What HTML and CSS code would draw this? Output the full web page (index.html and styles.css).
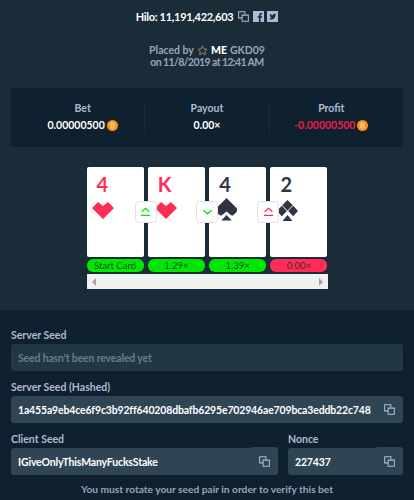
FILE: index.html
```html
<!DOCTYPE html>
<html lang="en">
<head>
    <meta charset="UTF-8">
    <meta name="viewport" content="width=device-width, initial-scale=1.0">
    <title>Hilo bet</title>
    <link rel="stylesheet" href="styles.css">
</head>
<body>
    <svg class="defs" width="0" height="0">
        <symbol id="copy" viewBox="0 0 12 12">
            <path d="M7.500 3.500V.7H.7v6.800h3.800M4.500 4.500h6.800v6.800H4.500z" fill="none" stroke="currentColor" stroke-width="1.100"/>
        </symbol>
        <symbol id="heart" viewBox="0 0 22 17">
            <path d="M6 0 11 4 16 0 22 6 11 17 0 6z" fill="#ff2d55"/>
        </symbol>
        <symbol id="spade" viewBox="0 0 21 23">
            <path d="M10.500 0 20 9.500c1.800 1.800 1.500 3.500 0 5L17.500 17c-1 .8-2 .6-3-.2l-4-3.300-4 3.300c-1 .8-2 1-3 .2L1 14.500c-1.500-1.500-1.800-3.200 0-5zM10.500 17l5.200 5.500H5.300z" fill="#2f3542"/>
        </symbol>
        <symbol id="diamond" viewBox="0 0 21 21">
            <path d="M10.500 0 15.800 5.300 10.500 10.600 5.200 5.300zM4.800 5.800 9.900 11 4.800 16.200 0 11zM16.200 5.800 21 11 16.200 16.200 11.100 11zM10.500 15l5 6H5.500z" fill="#2f3542"/>
        </symbol>
        <symbol id="btc" viewBox="0 0 11 11">
            <circle cx="5.500" cy="5.500" r="5.500" fill="#f7931a"/>
            <path d="M4 3h2.300c1 0 1 2 0 2.300 1.200 0 1.200 2.700 0 2.700H4zM4.500 5.400h1.700" fill="none" stroke="#fff" stroke-width=".8" opacity=".8"/>
        </symbol>
    </svg>

    <section class="top">
        <h1 class="title">
            <span class="title-text">Hilo: 11,191,422,603</span>
            <svg class="icon copy-light"><use href="#copy"/></svg>
            <svg class="icon social" viewBox="0 0 11 11"><path fill="#b1bad3" d="M0 0h11v11H7.600V6.800H9l.2-1.600H7.600v-1c0-.5.200-.8.800-.8h.8V1.900H8C6.700 1.900 6 2.700 6 4v1.200H4.600v1.600H6V11H0z"/></svg>
            <svg class="icon social" viewBox="0 0 11 11"><path fill="#b1bad3" fill-rule="evenodd" d="M0 0h11v11H0zM2 7.900c2.800 1.500 6.300.2 6.500-3.700l.7-.8-.8.200.6-.8-.8.300c-.9-1-2.600-.2-2.200 1.100-1.200 0-2.200-.6-2.900-1.400-.4.700-.2 1.500.4 2l-.6-.2c0 .7.400 1.200 1.100 1.400h-.6c.2.600.7.900 1.300 1-.6.500-1.500.7-2.700.7z"/></svg>
        </h1>

        <div class="placed">
            <div class="placed-line">
                Placed by
                <svg class="star" viewBox="0 0 12 12"><path d="M6 1l1.500 3.300 3.500.4-2.600 2.400.7 3.500L6 8.900l-3.100 1.700.7-3.500L1 4.700l3.500-.4z" fill="none" stroke="#a9865a" stroke-width="1"/></svg>
                <strong>ME</strong> <span class="user">GKD09</span>
            </div>
            <div class="placed-date">on 11/8/2019 at 12:41 AM</div>
        </div>

        <div class="stats">
            <div class="stat">
                <span class="stat-label">Bet</span>
                <span class="stat-value">0.00000500 <svg class="btc"><use href="#btc"/></svg></span>
            </div>
            <div class="stat">
                <span class="stat-label">Payout</span>
                <span class="stat-value">0.00×</span>
            </div>
            <div class="stat">
                <span class="stat-label">Profit</span>
                <span class="stat-value loss">-0.00000500 <svg class="btc"><use href="#btc"/></svg></span>
            </div>
        </div>

        <div class="game">
            <div class="hand">
                <div class="slot">
                    <div class="card red">
                        <span class="rank">4</span>
                        <svg class="suit heart"><use href="#heart"/></svg>
                    </div>
                    <div class="pill green">Start Card</div>
                </div>
                <div class="slot">
                    <div class="card red">
                        <span class="rank">K</span>
                        <svg class="suit heart"><use href="#heart"/></svg>
                        <div class="guess">
                            <svg viewBox="0 0 12 10"><path d="M1.800 4.800 6 1l4.200 3.800M1 8.700h10" fill="none" stroke="#00e701" stroke-width="1.400"/></svg>
                        </div>
                    </div>
                    <div class="pill green">1.29×</div>
                </div>
                <div class="slot">
                    <div class="card">
                        <span class="rank">4</span>
                        <svg class="suit spade"><use href="#spade"/></svg>
                        <div class="guess">
                            <svg viewBox="0 0 12 10"><path d="M1.500 3 6 7l4.500-4" fill="none" stroke="#00e701" stroke-width="1.400"/></svg>
                        </div>
                    </div>
                    <div class="pill green">1.39×</div>
                </div>
                <div class="slot">
                    <div class="card">
                        <span class="rank">2</span>
                        <svg class="suit club"><use href="#diamond"/></svg>
                        <div class="guess">
                            <svg viewBox="0 0 12 10"><path d="M1.800 4.800 6 1l4.200 3.800M1 8.700h10" fill="none" stroke="#ff2d55" stroke-width="1.400"/></svg>
                        </div>
                    </div>
                    <div class="pill red-pill">0.00×</div>
                </div>
            </div>
            <div class="scrollbar">
                <span class="arrow left"></span>
                <span class="arrow right"></span>
            </div>
        </div>
    </section>

    <section class="seeds">
        <div class="field">
            <label>Server Seed</label>
            <div class="input muted">Seed hasn't been revealed yet</div>
        </div>
        <div class="field">
            <label>Server Seed (Hashed)</label>
            <div class="input">
                <span>1a455a9eb4ce6f9c3b92ff640208dbafb6295e702946ae709bca3eddb22c748</span>
                <span class="copy-wrap"><svg class="icon"><use href="#copy"/></svg></span>
            </div>
        </div>
        <div class="field-row">
            <div class="field grow">
                <label>Client Seed</label>
                <div class="input">
                    <span>IGiveOnlyThisManyFucksStake</span>
                    <span class="copy-wrap"><svg class="icon"><use href="#copy"/></svg></span>
                </div>
            </div>
            <div class="field nonce">
                <label>Nonce</label>
                <div class="input">
                    <span>227437</span>
                    <span class="copy-wrap"><svg class="icon"><use href="#copy"/></svg></span>
                </div>
            </div>
        </div>
        <p class="note">You must rotate your seed pair in order to verify this bet</p>
    </section>
</body>
</html>
```

FILE: styles.css
```css
body {
    margin: 0;
    height: 500px;
    overflow: hidden;
    background-color: #1a2c38;
    font-family: "Lato", "Liberation Sans", sans-serif;
    font-size: 11px;
    font-weight: 700;
    color: #b1bad3;
}

.defs {
    display: block;
}

.top {
    height: 310px;
    padding: 9px 11px 0;
    box-sizing: border-box;
}

.title {
    display: flex;
    justify-content: center;
    align-items: center;
    gap: 3.500px;
    margin: 0;
    height: 14px;
    font-size: 11px;
    font-weight: 700;
    color: #fff;
}

.title-text {
    letter-spacing: -.3px;
}

.icon {
    width: 11px;
    height: 11px;
    flex: none;
}

.copy-light {
    margin-left: 1.500px;
    color: #b1bad3;
}

.placed {
    margin-top: 21px;
    text-align: center;
    line-height: 12px;
    font-size: 10.500px;
    color: #99a4b8;
}

.placed-line {
    display: flex;
    justify-content: center;
    align-items: center;
    gap: 3px;
}

.placed-date {
    letter-spacing: -.6px;
}

.placed strong {
    color: #fff;
}

.star {
    width: 11px;
    height: 11px;
}

.stats {
    display: flex;
    margin-top: 20px;
    height: 59px;
    padding: 14px 10px;
    box-sizing: border-box;
    background-color: #0f212e;
    border-radius: 3px;
}

.stat {
    flex: 1;
    display: flex;
    flex-direction: column;
    align-items: center;
    gap: 5px;
    border-left: 1px solid #1a2c38;
}

.stat:first-child {
    border-left: none;
}

.stat-value {
    display: flex;
    align-items: center;
    gap: 2px;
    color: #fff;
    font-size: 10.500px;
    line-height: 12px;
}

.stat-label {
    line-height: 12px;
    font-size: 10.500px;
}

.stat-value.loss {
    color: #ed1d49;
}

.btc {
    width: 11px;
    height: 11px;
}

.game {
    width: 241px;
    margin: 20px auto 0;
}

.hand {
    display: flex;
    justify-content: space-between;
}

.slot {
    width: 57px;
}

.card {
    position: relative;
    height: 90px;
    background-color: #fff;
    border-radius: 2px;
    color: #2f3542;
}

.card.red {
    color: #ff2d55;
}

.rank {
    position: absolute;
    top: 4px;
    left: 10px;
    font-size: 20px;
    line-height: 26px;
}

.suit {
    position: absolute;
}

.heart {
    top: 35px;
    left: 5px;
    width: 22px;
    height: 17px;
}

.slot:nth-child(2) .heart {
    left: 7px;
}

.spade {
    top: 31px;
    left: 7px;
    width: 21px;
    height: 23px;
}

.club {
    top: 33px;
    left: 7px;
    width: 21px;
    height: 21px;
}

.guess {
    position: absolute;
    top: 34px;
    left: -13px;
    display: flex;
    align-items: center;
    justify-content: center;
    width: 22px;
    height: 22px;
    box-sizing: border-box;
    background-color: #fff;
    border: 1px solid #dfe3e8;
    border-radius: 4px;
}

.guess svg {
    width: 11px;
    height: 10px;
}

.pill {
    height: 13px;
    margin-top: 2px;
    border-radius: 6px;
    text-align: center;
    font-size: 9.500px;
    font-weight: 400;
    line-height: 13px;
    color: rgba(15, 33, 46, .8);
}

.green {
    background-color: #00e701;
}

.red-pill {
    background-color: #ff2d55;
}

.scrollbar {
    display: flex;
    justify-content: space-between;
    align-items: center;
    height: 15px;
    margin-top: 2px;
    padding: 0 5px;
    background-color: #f1f1f1;
}

.arrow {
    width: 0;
    height: 0;
    border-top: 4px solid transparent;
    border-bottom: 4px solid transparent;
}

.arrow.left {
    border-right: 4px solid #a3a3a3;
}

.arrow.right {
    border-left: 4px solid #a3a3a3;
}

.seeds {
    height: 190px;
    padding: 19px 11px 0;
    box-sizing: border-box;
    background-color: #0f212e;
}

.field {
    margin-bottom: 10px;
}

.field label {
    display: block;
    margin-bottom: 3px;
    line-height: 12px;
    font-size: 10.500px;
    color: #b1bad3;
}

.input {
    display: flex;
    align-items: center;
    justify-content: space-between;
    height: 27px;
    padding-left: 7px;
    background-color: #2f4553;
    border-radius: 3px;
    font-size: 10.500px;
    letter-spacing: -.16px;
    color: #fff;
}

.input.muted {
    background-color: #213743;
    color: #6b7d8a;
}

.copy-wrap {
    display: flex;
    align-items: center;
    justify-content: flex-end;
    align-self: stretch;
    width: 28px;
    padding-right: 8px;
    box-sizing: border-box;
    color: #b1bad3;
}

.field-row .copy-wrap {
    margin-top: -1px;
    background-color: #2f4553;
    border-radius: 3px 3px 3px 0;
}

.field-row {
    display: flex;
    gap: 10px;
}

.grow {
    flex: 1;
}

.nonce {
    width: 115px;
}

.note {
    margin: -2px 0 0;
    text-align: center;
    font-size: 10.200px;
    color: #99a4b8;
}
```
